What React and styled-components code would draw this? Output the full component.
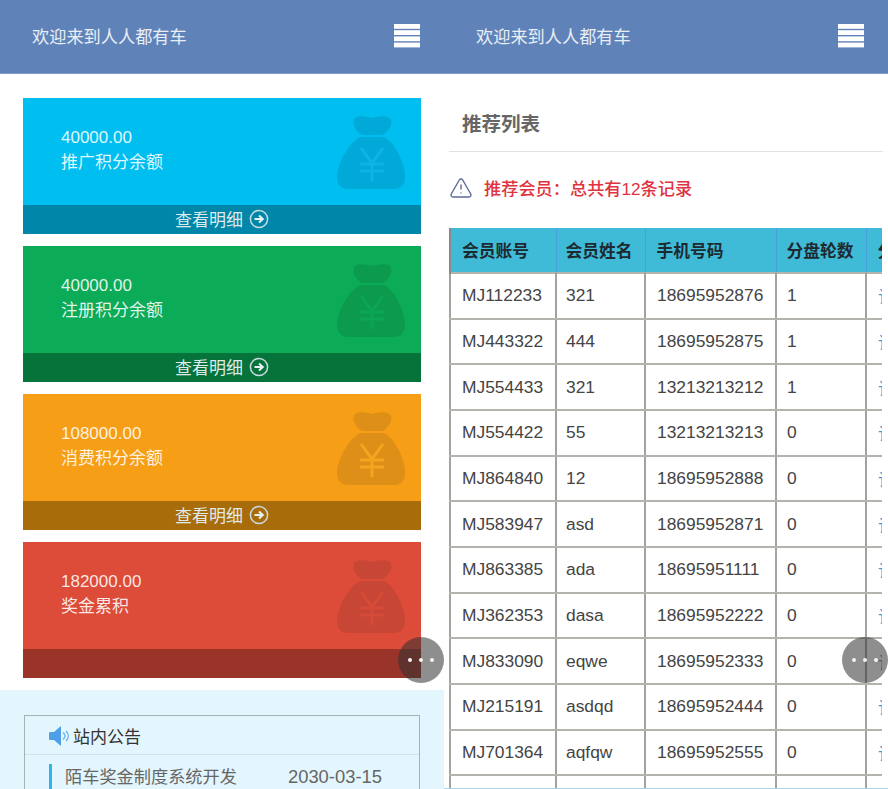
import React from "react";
import styled, { createGlobalStyle } from "styled-components";
import { TriangleAlert } from "lucide-react";

const Global = createGlobalStyle`
  html, body { margin: 0; padding: 0; background: #fff; }
  body { font-family: "Liberation Sans", "Noto Sans CJK SC", sans-serif; }
  * { box-sizing: border-box; }
`;

const Page = styled.div`
  display: flex;
  width: 888px;
  height: 789px;
  overflow: hidden;
`;
const Panel = styled.section`
  position: relative;
  width: 444px;
  height: 789px;
  flex: none;
  overflow: hidden;
  display: flex;
  flex-direction: column;
`;
const Header = styled.header`
  height: 74px;
  flex: none;
  background: #5f83b9;
  border-bottom: 1px solid #7f9fcb;
  display: flex;
  align-items: center;
  justify-content: space-between;
  padding: 0 24px 2px 32px;
  color: #e9eef5;
  font-size: 17.2px;
`;
const CardList = styled.div`
  display: flex;
  flex-direction: column;
  gap: 12px;
  padding: 24px 23px 12px;
`;
const Card = styled.article`
  height: 136px;
  display: flex;
  flex-direction: column;
  background: ${(p) => p.$bg};
  color: rgba(255, 255, 255, 0.88);
`;
const CardBody = styled.div`
  flex: 1;
  display: flex;
  align-items: flex-start;
  justify-content: space-between;
  padding: 27px 15px 0 38px;
`;
const Amount = styled.div`
  font-size: 17px;
  line-height: 25px;
`;
const Label = styled.div`
  font-size: 17px;
  line-height: 25px;
`;
const CardFoot = styled.div`
  height: 29px;
  display: flex;
  align-items: center;
  justify-content: center;
  gap: 6px;
  padding: 0 0 2px 0;
  background: ${(p) => p.$bg};
  font-size: 17px;
  color: #dfeaec;
`;
const BagIcon = styled.svg`
  width: 70px;
  height: 74px;
  margin-top: -10px;
  flex: none;
`;
const Notice = styled.div`
  flex: 1;
  background: #e3f6fd;
  padding: 25px 24px 0;
  border-bottom: 1px solid #a9bcc6;
`;
const NoticeBox = styled.div`
  border: 1px solid #a5b3b8;
  border-bottom: 0;
  height: 100%;
`;
const NoticeHead = styled.div`
  height: 39px;
  display: flex;
  align-items: center;
  gap: 3px;
  padding: 1px 0 0 24px;
  border-bottom: 1px solid #d3e2e8;
  font-size: 17px;
  color: #333;
`;
const NoticeRow = styled.div`
  margin: 9px 0 0 24px;
  padding: 0 37px 0 13px;
  border-left: 3px solid #2fb6e4;
  display: flex;
  justify-content: space-between;
  font-size: 17.2px;
  line-height: 26px;
  color: #666;
`;
const NoticeDate = styled.span`
  font-size: 18.4px;
`;
const Floating = styled.div`
  position: absolute;
  top: 637px;
  right: 0;
  width: 46px;
  height: 46px;
  border-radius: 50%;
  background: rgba(50, 50, 50, 0.55);
  display: flex;
  align-items: center;
  justify-content: center;
  gap: 7px;
`;
const Dot = styled.i`
  width: 4px;
  height: 4px;
  border-radius: 50%;
  background: #f2f2f2;
`;
const Content = styled.div`
  flex: 1;
  padding: 0 5px;
  min-height: 0;
  display: flex;
  flex-direction: column;
  border-bottom: 1px solid #a9d6ea;
`;
const Title = styled.h2`
  margin: 0;
  height: 78px;
  padding: 38px 0 0 13px;
  border-bottom: 1px solid #e2e2e2;
  font-size: 19.5px;
  line-height: 24px;
  font-weight: 700;
  color: #666;
  flex: none;
`;
const Alert = styled.div`
  display: flex;
  align-items: center;
  gap: 11px;
  height: 76px;
  padding-bottom: 5px;
  font-size: 17.2px;
  font-weight: 500;
  color: #e0333f;
  flex: none;
`;
const TableClip = styled.div`
  width: 433px;
  overflow: hidden;
  flex: 1;
  min-height: 0;
`;
const Table = styled.table`
  border-collapse: collapse;
  table-layout: fixed;
  width: 516px;
  font-size: 17.4px;
  color: #444;
`;
const Th = styled.th`
  height: 45px;
  padding: 0 0 0 11px;
  background: #3fbbd8;
  border: 1px solid #4a9fe0;
  border-top: 0;
  border-bottom-color: #9aa;
  text-align: left;
  font-size: 16.8px;
  font-weight: 700;
  color: #1d2a30;
  white-space: nowrap;
  overflow: hidden;
  &:first-child { border-left: 2px solid #888; }
  &:nth-child(2) { padding-left: 9px; }
  &:nth-child(4) { padding-left: 10px; }
`;
const Td = styled.td`
  height: 45.67px;
  padding: 0 0 0 11px;
  border-width: 2px;
  border-style: solid;
  border-color: #b4b4ae #a2a29e;
  white-space: nowrap;
  overflow: hidden;
  color: ${(p) => (p.$link ? "#3b9bd9" : "#444")};
  &:nth-child(2) { padding-left: 9px; }
  &:nth-child(4) { padding-left: 10px; }
`;

const cols = [106, 89, 131, 90, 100];
const rows = [
  ["MJ112233", "321", "18695952876", "1"],
  ["MJ443322", "444", "18695952875", "1"],
  ["MJ554433", "321", "13213213212", "1"],
  ["MJ554422", "55", "13213213213", "0"],
  ["MJ864840", "12", "18695952888", "0"],
  ["MJ583947", "asd", "18695952871", "0"],
  ["MJ863385", "ada", "18695951111", "0"],
  ["MJ362353", "dasa", "18695952222", "0"],
  ["MJ833090", "eqwe", "18695952333", "0"],
  ["MJ215191", "asdqd", "18695952444", "0"],
  ["MJ701364", "aqfqw", "18695952555", "0"],
  ["", "", "", ""],
];
const cards = [
  { amount: "40000.00", label: "推广积分余额", bg: "#00bff0", foot: "#0086a8", bag: "#00a9d8", mark: "#0cb4e4" },
  { amount: "40000.00", label: "注册积分余额", bg: "#0cab58", foot: "#05733a", bag: "#0b9a4e", mark: "#0ca556" },
  { amount: "108000.00", label: "消费积分余额", bg: "#f69e16", foot: "#a96c0b", bag: "#dd8f18", mark: "#f5a41f" },
  { amount: "182000.00", label: "奖金累积", bg: "#dd4b39", foot: "#9a3428", bag: "#c74636", mark: "#d64a38" },
];

const Burger = () => (
  <svg width="26" height="24" viewBox="0 0 26 24" fill="#fff" aria-hidden="true">
    <rect x="0" y="0" width="26" height="4.8" />
    <rect x="0" y="6.2" width="26" height="4.8" />
    <rect x="0" y="12.4" width="26" height="4.8" />
    <rect x="0" y="18.6" width="26" height="4.8" />
  </svg>
);
const Bag = ({ color, mark }) => (
  <BagIcon viewBox="0 0 70 74" aria-hidden="true">
    <path fill={color} d="M18 5 C20 0 27 1 36 3 C45 1 52 0 55 5 C57 11 51 17 47 20 L26 20 C21 17 16 11 18 5Z" />
    <path fill={color} d="M24 22 L48 22 C60 28 69 50 69 62 C69 70 64 74 58 74 L12 74 C6 74 1 70 1 62 C1 50 12 28 24 22Z" />
    <path fill="none" stroke={mark} strokeWidth="3" d="M25 33 L36 48 L47 33 M24 49 H48 M24 56 H48 M36 48 V66" />
  </BagIcon>
);
const ArrowCircle = () => (
  <svg width="20" height="20" viewBox="0 0 20 20" aria-hidden="true">
    <circle cx="10" cy="10" r="8.6" fill="none" stroke="#c6dadf" strokeWidth="1.5" />
    <path fill="none" stroke="#e8f2f4" strokeWidth="2" d="M5.5 10 H13.5 M10 6.5 L13.8 10 L10 13.5" />
  </svg>
);
const Speaker = () => (
  <svg width="21" height="20" viewBox="0 0 21 20" aria-hidden="true">
    <path fill="#4f9fe8" d="M0 7 C0 6 1 6 2 6 H5 L12 0 V20 L5 14 H2 C1 14 0 14 0 13Z" />
    <path fill="none" stroke="#6fb2ee" strokeWidth="1.4" d="M14 6.5 C16.5 8.5 16.5 11.5 14 13.5 M17 5 C20 8 20 12 17 15" />
  </svg>
);
const More = () => (
  <Floating>
    <Dot /><Dot /><Dot />
  </Floating>
);

export default function App() {
  return (
    <Page>
      <Global />
      <Panel>
        <Header>
          <span>欢迎来到人人都有车</span>
          <Burger />
        </Header>
        <CardList>
          {cards.map((c) => (
            <Card key={c.label} $bg={c.bg}>
              <CardBody>
                <div>
                  <Amount>{c.amount}</Amount>
                  <Label>{c.label}</Label>
                </div>
                <Bag color={c.bag} mark={c.mark} />
              </CardBody>
              <CardFoot $bg={c.foot}>
                {c.label !== "奖金累积" && (
                  <>
                    <span>查看明细</span>
                    <ArrowCircle />
                  </>
                )}
              </CardFoot>
            </Card>
          ))}
        </CardList>
        <Notice>
          <NoticeBox>
            <NoticeHead>
              <Speaker />
              <span>站内公告</span>
            </NoticeHead>
            <NoticeRow>
              <span>陌车奖金制度系统开发</span>
              <NoticeDate>2030-03-15</NoticeDate>
            </NoticeRow>
          </NoticeBox>
        </Notice>
        <More />
      </Panel>
      <Panel>
        <Header>
          <span>欢迎来到人人都有车</span>
          <Burger />
        </Header>
        <Content>
          <Title>推荐列表</Title>
          <Alert>
            <TriangleAlert size={24} color="#5d6b98" strokeWidth={1.4} />
            <span>推荐会员：总共有12条记录</span>
          </Alert>
          <TableClip>
            <Table>
              <colgroup>
                {cols.map((w, i) => <col key={i} style={{ width: w }} />)}
              </colgroup>
              <thead>
                <tr>
                  <Th>会员账号</Th>
                  <Th>会员姓名</Th>
                  <Th>手机号码</Th>
                  <Th>分盘轮数</Th>
                  <Th>分红</Th>
                </tr>
              </thead>
              <tbody>
                {rows.map((r, i) => (
                  <tr key={i}>
                    {r.map((v, j) => <Td key={j}>{v}</Td>)}
                    <Td $link>{r[0] ? "详情" : ""}</Td>
                  </tr>
                ))}
              </tbody>
            </Table>
          </TableClip>
        </Content>
        <More />
      </Panel>
    </Page>
  );
}
